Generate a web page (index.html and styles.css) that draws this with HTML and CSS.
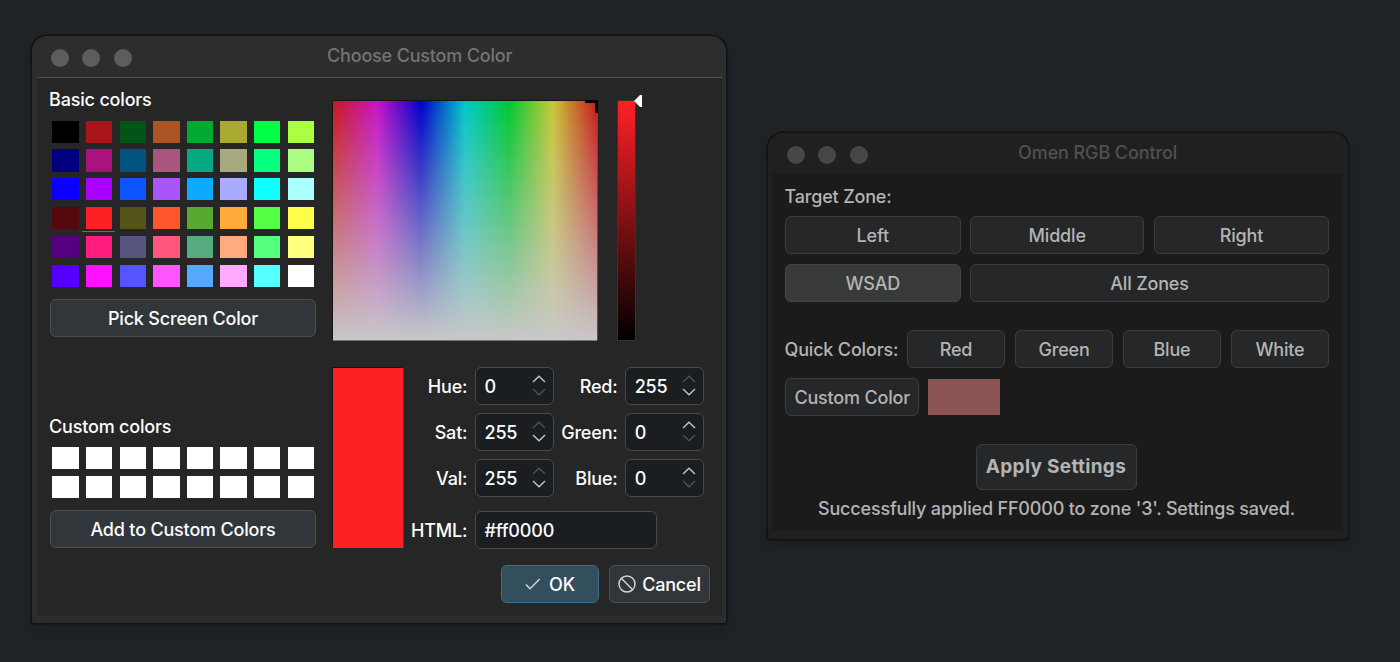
FILE: index.html
```html
<!DOCTYPE html>
<html lang="en">
<head>
<meta charset="utf-8">
<title>Omen RGB Control</title>
<link rel="stylesheet" href="styles.css">
</head>
<body>
<svg class="defs" width="0" height="0">
  <symbol id="up" viewBox="0 0 14 8"><path d="M1 7 L7 1.2 L13 7"/></symbol>
  <symbol id="down" viewBox="0 0 14 8"><path d="M1 1 L7 6.8 L13 1"/></symbol>
</svg>
<main class="desktop">
  <section class="window picker">
    <header class="titlebar"><span class="dots"><i></i><i></i><i></i></span><h1>Choose Custom Color</h1></header>
    <div class="panel picker-panel">
      <div class="left">
        <div class="label">Basic colors</div>
        <div class="swatches basic" id="basic"></div>
        <button class="btn">Pick Screen Color</button>
        <div class="label custom-label">Custom colors</div>
        <div class="swatches custom" id="custom"></div>
        <button class="btn">Add to Custom Colors</button>
      </div>
      <div class="right">
        <div class="spectra">
          <div class="spectrum"><span class="cross"></span></div>
          <div class="value-bar"></div>
          <svg class="pointer" width="8" height="12" viewBox="0 0 8 12"><path d="M0 6 L6 0 H8 V12 H6 Z" fill="#fff"/></svg>
        </div>
        <div class="details">
          <div class="preview"></div>
          <div class="fields">
            <label>Hue:</label><div class="spin"><span>0</span><div class="arrows"><svg class="on"><use href="#up"/></svg><svg><use href="#down"/></svg></div></div>
            <label>Red:</label><div class="spin"><span>255</span><div class="arrows"><svg><use href="#up"/></svg><svg class="on"><use href="#down"/></svg></div></div>
            <label>Sat:</label><div class="spin"><span>255</span><div class="arrows"><svg><use href="#up"/></svg><svg class="on"><use href="#down"/></svg></div></div>
            <label>Green:</label><div class="spin"><span>0</span><div class="arrows"><svg class="on"><use href="#up"/></svg><svg><use href="#down"/></svg></div></div>
            <label>Val:</label><div class="spin"><span>255</span><div class="arrows"><svg><use href="#up"/></svg><svg class="on"><use href="#down"/></svg></div></div>
            <label>Blue:</label><div class="spin"><span>0</span><div class="arrows"><svg class="on"><use href="#up"/></svg><svg><use href="#down"/></svg></div></div>
            <label class="html-label">HTML:</label><div class="spin html-input"><span>#ff0000</span></div>
          </div>
        </div>
        <div class="actions">
          <button class="btn ok"><svg width="16" height="12" viewBox="0 0 16 12"><path d="M1 6.5 L5 10.8 L14.7 1"/></svg>OK</button>
          <button class="btn cancel"><svg width="18" height="18" viewBox="0 0 18 18"><circle cx="9" cy="9" r="8"/><path d="M3.3 3.3 L14.7 14.7"/></svg>Cancel</button>
        </div>
      </div>
    </div>
  </section>

  <section class="window control">
    <header class="titlebar"><span class="dots"><i></i><i></i><i></i></span><h1>Omen RGB Control</h1></header>
    <div class="panel control-panel">
      <div class="label">Target Zone:</div>
      <div class="zones">
        <button class="btn">Left</button><button class="btn">Middle</button><button class="btn">Right</button>
        <button class="btn selected">WSAD</button><button class="btn all">All Zones</button>
      </div>
      <div class="quick"><span class="label">Quick Colors:</span><button class="btn">Red</button><button class="btn">Green</button><button class="btn">Blue</button><button class="btn">White</button></div>
      <div class="chosen"><button class="btn">Custom Color</button><span class="chip"></span></div>
      <button class="btn apply">Apply Settings</button>
      <div class="status">Successfully applied FF0000 to zone '3'. Settings saved.</div>
    </div>
  </section>
</main>
<script src="swatches.js"></script>
</body>
</html>
```
FILE: styles.css
```css
* { box-sizing: border-box; }
body {
  margin: 0;
  background: #202427;
  font: 500 18px/22px Inter, "Liberation Sans", sans-serif;
  letter-spacing: -0.18px;
  color: #fcfcfc;
}
.defs { position: absolute; }
.desktop { position: relative; width: 1400px; height: 662px; overflow: hidden; }
.window {
  position: absolute;
  border-radius: 15px 15px 2px 2px;
  box-shadow: 0 0 0 1.5px #111213, 0 5px 18px rgba(15, 15, 17, .4);
  display: flex;
  flex-direction: column;
}
.picker { left: 32px; top: 36px; width: 694px; height: 587px; background: #2d2d2d; padding: 0 4px 7px 5px; }
.control { left: 768px; top: 133px; width: 580px; height: 406px; background: #202020; color: #b4b4b4; padding: 0 6px 8px 4px; }
.titlebar { position: relative; flex: none; height: 41px; display: flex; align-items: center; }
h1 { margin: 0; flex: 1; text-align: center; font: 500 18px/22px Inter, sans-serif; color: #747474; }
.picker h1 { padding: 0 0 2px 66px; }
.dots { display: flex; gap: 13.2px; padding: 2px 0 0 14.3px; width: 0; }
.dots i { flex: none; width: 18px; height: 18px; border-radius: 50%; background: #5d5d5d; }
.control h1 { color: #505050; padding: 0 0 1px 66px; letter-spacing: -0.1px; }
.control .dots { padding-left: 15.3px; }
.control .dots i { background: #474747; }
.panel { flex: 1; background: #262626; }
.picker-panel { border-top: 1px solid #515151; display: flex; padding-left: 12px; }
.left { width: 267px; padding-top: 11px; display: flex; flex-direction: column; }
.label { height: 22px; white-space: nowrap; }
.left .btn { margin-left: 1px; width: 266px; flex: none; }
.swatches { display: grid; grid-template-columns: repeat(8, 26.5px); column-gap: 7.1px; padding-left: 3.4px; }
.swatches span { position: relative; height: 22.2px; }
.basic { row-gap: 6.6px; margin: 9.7px 0 12.1px; }
.custom { row-gap: 6.8px; margin: 9px 0 12px; }
.custom span { background: #fff; }
.custom-label { margin-top: 78.8px; }
.swatches .current::after { content: ""; position: absolute; left: -4px; right: -3px; bottom: -3px; height: 1.5px; background: #3180a4; }
.btn {
  display: flex;
  align-items: center;
  justify-content: center;
  height: 38px;
  padding: 2px 0 0;
  border: 1px solid #4d5053;
  border-radius: 6px;
  background: #31363b;
  color: inherit;
  font: inherit;
  letter-spacing: inherit;
  white-space: nowrap;
}
.right { margin-left: 16.6px; }
.spectra { display: flex; align-items: flex-start; padding-top: 23px; }
.spectrum {
  position: relative;
  width: 264px;
  height: 239.4px;
  box-shadow: 0 -1px #141414, -1px 0 #141414, 1px 0 #555, 0 1px #777;
  background:
    linear-gradient(to bottom, rgba(200, 200, 200, 0), #c8c8c8),
    linear-gradient(to right, #c8191c, #c814c8 16.7%, #0000c8 33.3%, #00c8c8 50%, #00c832 66.7%, #c8c837 83.3%, #c8191c);
}
.cross { position: absolute; right: -1px; top: -1px; width: 13px; height: 13px; border-top: 3px solid #000; border-right: 3px solid #000; }
.value-bar { margin-left: 21.4px; width: 16.6px; height: 239.4px; background: linear-gradient(#ff2026, #000); box-shadow: 0 0 0 1px #333; }
.pointer { margin: -6px 0 0 -1px; position: relative; }
.details { display: flex; margin-top: 27.6px; }
.preview { width: 70.4px; height: 180px; background: #ff2026; box-shadow: -1px -1px #151515, 1px 0 #444; }
.fields { display: grid; grid-template-columns: 64px 79px 56px 79px; grid-template-rows: 38px 38px 38px 38px; column-gap: 7.6px; row-gap: 7.8px; margin: -1px 0 0 0.4px; }
.fields label { text-align: right; line-height: 39px; white-space: nowrap; justify-self: end; }
.spin { height: 38px; border: 1px solid #47494a; border-radius: 6px; background: #1b1e20; display: flex; justify-content: space-between; align-items: center; padding: 0 7px 0 8.5px; }
.spin span { padding-top: 2px; }
.arrows { display: flex; flex-direction: column; gap: 5px; }
.arrows svg { display: block; width: 14px; height: 8px; fill: none; stroke: #505253; stroke-width: 1.3; }
.arrows .on { stroke: #c9cacb; }
.html-input { grid-column: 2 / 5; width: 182px; margin-top: 6.5px; }
.fields .html-label { margin-top: 6.5px; }
.actions { display: flex; gap: 10px; margin: 16.6px 0 0 168.4px; }
.actions svg { fill: none; stroke: #d5d7d8; stroke-width: 1.4; margin-top: -1px; }
.ok { width: 98px; gap: 8px; background: #334f5e; border-color: #39718e; }
.cancel { width: 101px; gap: 6px; }
.control-panel { background: #1b1b1b; padding: 12px 14px 0 13px; display: flex; flex-direction: column; }
.control .btn { background: #252729; border-color: #3b3d3e; }
.zones { display: grid; grid-template-columns: 175.5px 174px 175px; gap: 10px 9.7px; margin-top: 8px; }
.zones .all { grid-column: 2 / 4; }
.control .selected { background: #383939; border-color: #434445; }
.quick { display: grid; grid-template-columns: 112px repeat(4, 98px); column-gap: 10px; align-items: center; margin-top: 28px; }
.quick .label, .control-panel > .label { margin-left: -0.5px; }
.quick .label { padding-top: 1px; }
.chosen { display: flex; align-items: center; gap: 8.6px; margin-top: 10px; }
.chosen .btn { width: 134.4px; }
.chip { width: 72px; height: 36px; margin-top: -1px; background: #8b5354; }
.control .apply { align-self: center; width: 161px; height: 46px; margin: 28px 0 0 -1px; padding-top: 0; font-weight: 700; font-size: 19px; letter-spacing: 0.3px; }
.status { margin-top: 8px; text-align: center; white-space: nowrap; }
```
FILE: swatches.js
```js
const basic = [
  "#000000", "#a9151a", "#005416", "#aa5523", "#00a92f", "#aaaa33", "#00ff44", "#aaff43",
  "#000080", "#a9127f", "#00547f", "#aa557f", "#06a981", "#a9a97f", "#07ff80", "#aaff80",
  "#0b00ff", "#a900ff", "#0c55ff", "#aa55fa", "#0eaaff", "#aaaaff", "#0fffff", "#aaffff",
  "#55090c", "#ff2026", "#555519", "#ff572d", "#55aa2f", "#ffaa3a", "#55ff43", "#ffff4a",
  "#55007f", "#ff1b80", "#55557f", "#ff557f", "#55aa80", "#ffaa80", "#55ff80", "#ffff80",
  "#5500ff", "#ff12ff", "#5555ff", "#ff55ff", "#55aaff", "#ffaaff", "#55ffff", "#ffffff"
];
basic.forEach((color, i) => {
  const cell = document.createElement("span");
  cell.style.background = color;
  if (i === 25) cell.className = "current";
  document.getElementById("basic").append(cell);
});
for (let i = 0; i < 16; i++) document.getElementById("custom").append(document.createElement("span"));
```
